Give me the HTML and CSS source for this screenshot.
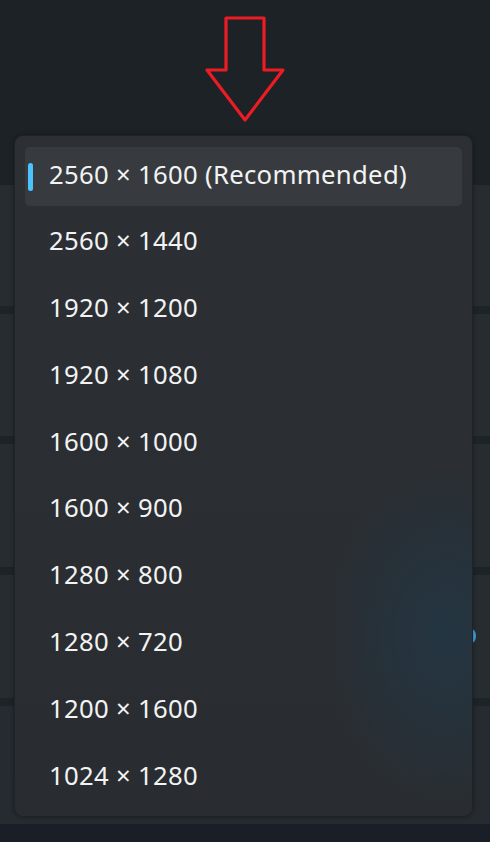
FILE: index.html
```html
<!DOCTYPE html>
<html>
<head>
<meta charset="utf-8">
<link rel="stylesheet" href="styles.css">
</head>
<body>
<div class="page">
  <div class="header">
    <svg class="arrow" width="490" height="185" viewBox="0 0 490 185">
      <polygon points="226,18 264,18 264,70 283,70 245,120 207,70 226,70" fill="none" stroke="#ec1c24" stroke-width="3.2" stroke-linejoin="round"/>
    </svg>
  </div>
  <div class="rows">
    <div class="row r1"></div>
    <div class="row r2"></div>
    <div class="row r3"></div>
    <div class="row r4"><span class="thumb"></span></div>
    <div class="row r5"></div>
  </div>
  <div class="footer"></div>

  <div class="menu">
    <div class="item selected"><span class="indicator"></span>2560 × 1600 (Recommended)</div>
    <div class="item">2560 × 1440</div>
    <div class="item">1920 × 1200</div>
    <div class="item">1920 × 1080</div>
    <div class="item">1600 × 1000</div>
    <div class="item">1600 × 900</div>
    <div class="item">1280 × 800</div>
    <div class="item">1280 × 720</div>
    <div class="item">1200 × 1600</div>
    <div class="item">1024 × 1280</div>
  </div>
</div>
</body>
</html>
```
FILE: styles.css
```css
html, body {
  margin: 0;
  padding: 0;
}
body {
  width: 490px;
  height: 842px;
  overflow: hidden;
  background: #1c2226;
  font-family: "Noto Sans", "Open Sans", sans-serif;
}
.page {
  position: relative;
  width: 490px;
  height: 842px;
  display: flex;
  flex-direction: column;
}
.header {
  height: 185px;
  background: #1c2226;
}
.arrow {
  display: block;
}
.rows {
  display: flex;
  flex-direction: column;
  gap: 8px;
  background: #1d2428;
}
.row {
  position: relative;
  background: #272c31;
}
.r1 { height: 121px; }
.r2 { height: 122px; }
.r3 { height: 123px; }
.r4 { height: 123px; }
.r5 { height: 118px; background: #262b31; }
.thumb {
  position: absolute;
  left: 467px;
  top: 54px;
  width: 9px;
  height: 14px;
  border-radius: 50%;
  background: #3aa0d8;
}
.footer {
  flex: 1;
  background: #1a1f27;
}
.menu {
  position: absolute;
  left: 14px;
  top: 135px;
  width: 459px;
  height: 682px;
  box-sizing: border-box;
  padding: 11px 10px 11px 10px;
  border: 1px solid #1f2327;
  border-radius: 9px;
  background:
    radial-gradient(ellipse 120px 170px at 430px 500px, rgba(33, 56, 72, 0.75), rgba(33, 56, 72, 0) 100%),
    linear-gradient(180deg, #2c3034 0%, #2a2e32 60%, #292d31 100%);
  box-shadow: 0 0 4px rgba(0, 0, 0, 0.35);
  display: flex;
  flex-direction: column;
  gap: 7.8px;
}
.item {
  position: relative;
  height: 59px;
  box-sizing: border-box;
  padding-bottom: 5px;
  flex: none;
  display: flex;
  align-items: center;
  padding-left: 24px;
  color: #f3f3f3;
  font-size: 25.7px;
  letter-spacing: 0.3px;
  border-radius: 5px;
}
.item.selected {
  background: #373b3f;
}
.indicator {
  position: absolute;
  left: 3px;
  top: 16px;
  width: 5px;
  height: 28px;
  border-radius: 3px;
  background: #4cc2ff;
}
```
